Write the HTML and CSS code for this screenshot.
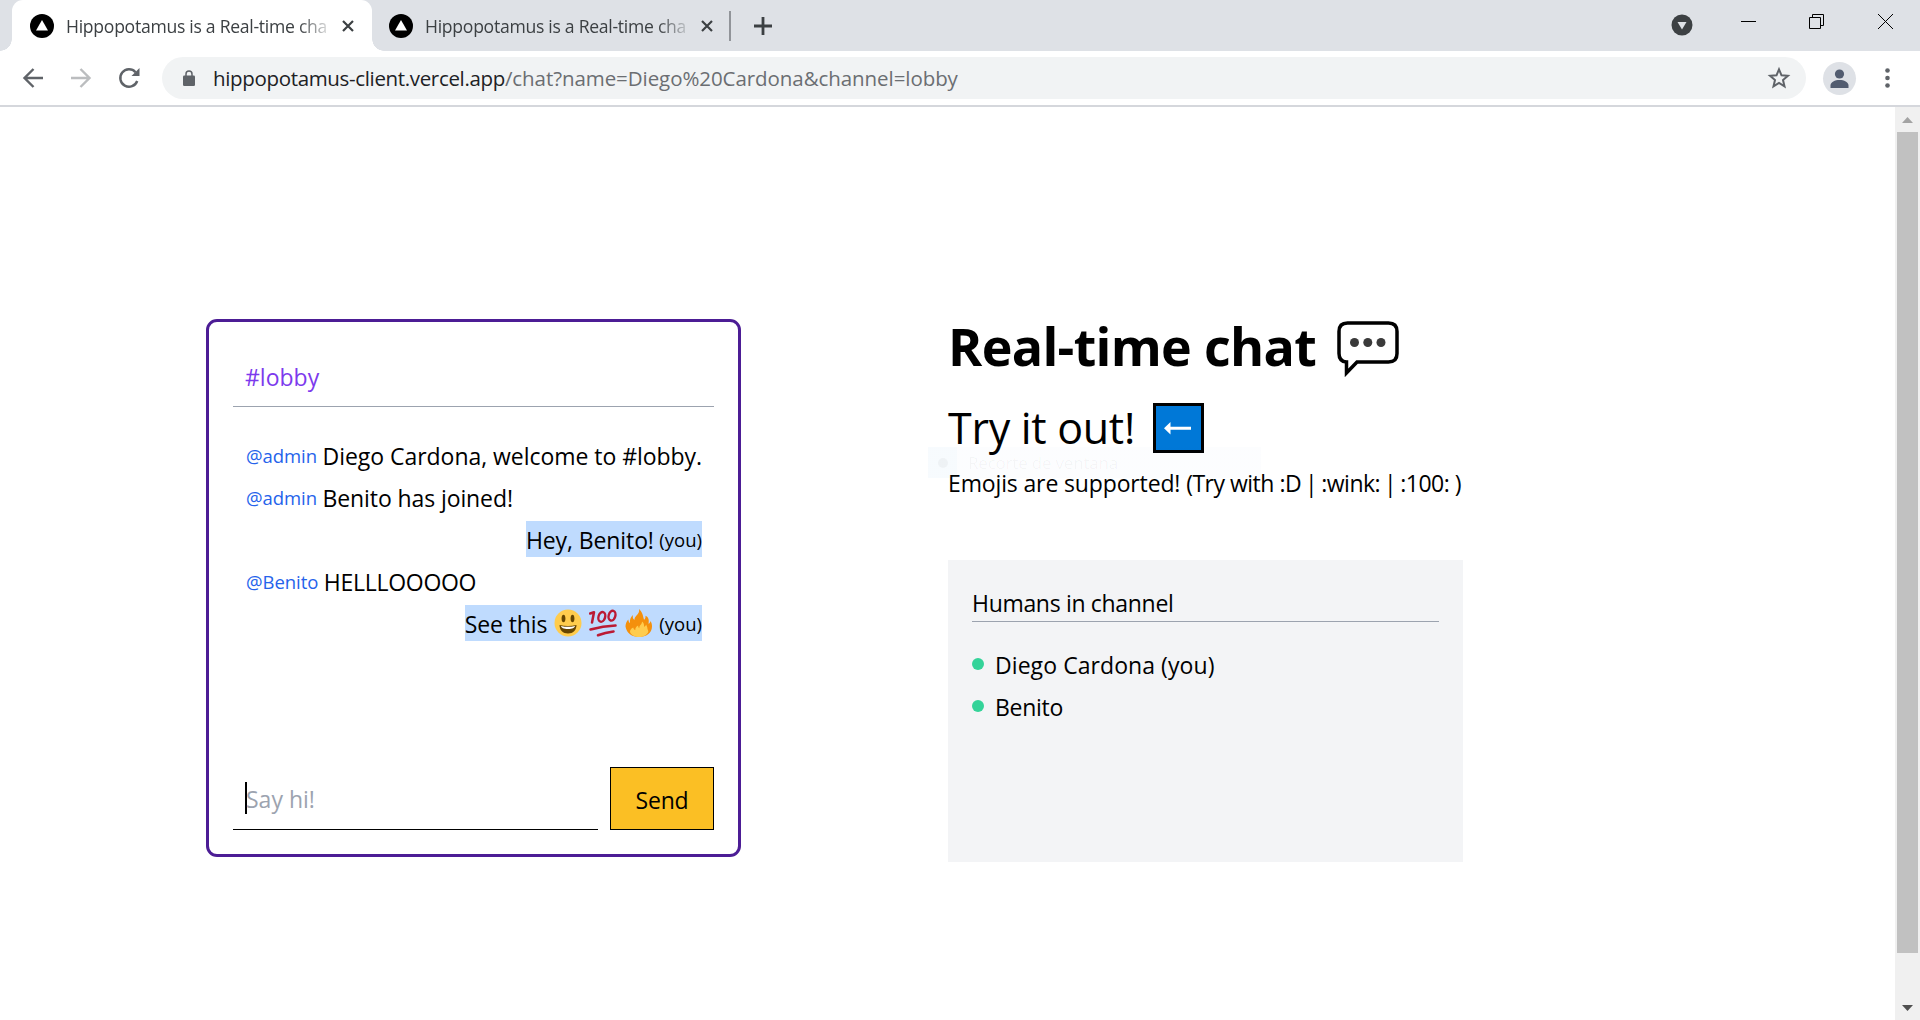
FILE: index.html
```html
<!DOCTYPE html>
<html lang="en">
<head>
<meta charset="utf-8">
<title>Hippopotamus is a Real-time chat</title>
<link rel="stylesheet" href="styles.css">
</head>
<body>
<header class="tabstrip">
  <div class="tab tab-active">
    <svg class="favicon" viewBox="0 0 24 24"><circle cx="12" cy="12" r="12"/><path d="M12 6l6 10.500H6z" fill="#fff"/></svg>
    <span class="tab-title">Hippopotamus is a Real-time cha</span>
    <svg class="tab-close" viewBox="0 0 12 12"><path d="M1 1l10 10M11 1L1 11"/></svg>
  </div>
  <div class="tab tab-idle">
    <svg class="favicon" viewBox="0 0 24 24"><circle cx="12" cy="12" r="12"/><path d="M12 6l6 10.500H6z" fill="#fff"/></svg>
    <span class="tab-title">Hippopotamus is a Real-time cha</span>
    <svg class="tab-close" viewBox="0 0 12 12"><path d="M1 1l10 10M11 1L1 11"/></svg>
  </div>
  <div class="tab-sep"></div>
  <svg class="new-tab" viewBox="0 0 18 18"><path d="M9 0v18M0 9h18"/></svg>
  <div class="window-controls">
    <svg class="media" viewBox="0 0 22 22"><circle cx="11" cy="11" r="10.500" fill="#3c4043"/><path d="M6.500 8h9L11 15.500z" fill="#dee1e6"/></svg>
    <svg class="minimize" viewBox="0 0 15 15"><path d="M0 7.500h15"/></svg>
    <svg class="restore" viewBox="0 0 15 15"><path d="M.5 3.500h11v11H.5zM3.500 3.500v-3h11v11h-3"/></svg>
    <svg class="close" viewBox="0 0 15 15"><path d="M0 0l15 15M15 0L0 15"/></svg>
  </div>
</header>
<nav class="toolbar">
  <svg class="nav-icon" viewBox="0 0 20 20"><path d="M20 10H1.500M10.500 1L1.500 10l9 9"/></svg>
  <svg class="nav-icon nav-disabled" viewBox="0 0 20 20"><path d="M0 10h18.500M9.500 1l9 9-9 9"/></svg>
  <svg class="nav-icon" viewBox="0 0 20 20"><path d="M18.200 13A8.700 8.700 0 1 1 16.500 4.200"/><path class="solid" d="M20.500 0v8h-8z"/></svg>
  <div class="omnibox">
    <svg class="lock" viewBox="0 0 12 16"><rect y="5.500" width="12" height="10.500" rx="1.300"/><path d="M3 6V4a3 3 0 0 1 6 0v2" fill="none" stroke="#5f6368" stroke-width="1.500"/></svg>
    <span class="url"><span class="url-host">hippopotamus-client.vercel.app</span><span class="url-path">/chat?name=Diego%20Cardona&amp;channel=lobby</span></span>
    <svg class="star" viewBox="0 0 22 22"><path d="M11 2.300l2.500 6 6.400.500-4.900 4.200 1.500 6.300-5.500-3.400-5.500 3.400L7 13 2.100 8.800l6.400-.500z"/></svg>
  </div>
  <svg class="avatar" viewBox="0 0 33 33"><circle cx="16.500" cy="16.500" r="16.500" fill="#dee1e6"/><circle cx="16.500" cy="12" r="4.600" fill="#525c70"/><path d="M7.500 26v-2.500c0-3.500 4.500-5.500 9-5.500s9 2 9 5.500V26z" fill="#525c70"/></svg>
  <svg class="menu" viewBox="0 0 5 20"><circle cx="2.500" cy="2.500" r="2.300"/><circle cx="2.500" cy="10" r="2.300"/><circle cx="2.500" cy="17.500" r="2.300"/></svg>
</nav>
<div class="viewport">
  <main class="page">
    <section class="chat">
      <h2 class="channel">#lobby</h2>
      <ul class="messages">
        <li><span class="author">@admin</span><span class="text">Diego Cardona, welcome to #lobby.</span></li>
        <li><span class="author">@admin</span><span class="text tight">Benito has joined!</span></li>
        <li class="own"><span class="text tight">Hey, Benito!</span><span class="you">(you)</span></li>
        <li><span class="author">@Benito</span><span class="text tighter">HELLLOOOOO</span></li>
        <li class="own"><span class="text tight">See this</span>
          <svg class="emoji" viewBox="0 0 28 28"><circle cx="14" cy="14" r="13.500" fill="#ffcc4d"/><ellipse cx="9.500" cy="9.500" rx="1.900" ry="3.800" fill="#664500"/><ellipse cx="18.500" cy="9.500" rx="1.900" ry="3.800" fill="#664500"/><path d="M5.500 16q8.500 2 17 0c0 5-3.500 8.500-8.500 8.500S5.500 21 5.500 16z" fill="#664500"/><path d="M7 17q7 1.700 14 0c-.5 2-2.500 3-7 3s-6.500-1-7-3z" fill="#fff"/></svg>
          <svg class="emoji" viewBox="0 0 28 28"><g fill="none" stroke="#bb1a34" stroke-linecap="round" stroke-linejoin="round"><path stroke-width="2.500" d="M1.200 4.500L5 3.200 3 13.500"/><ellipse stroke-width="2.400" cx="12.800" cy="7.900" rx="3.300" ry="5" transform="rotate(16 12.800 7.900)"/><ellipse stroke-width="2.400" cx="23" cy="6.700" rx="3.300" ry="5" transform="rotate(16 23 6.700)"/><path stroke-width="2.600" d="M1.500 20.500Q14 17 26.500 16.500M9 26.200Q16 23.500 24.500 22.500"/></g></svg>
          <svg class="emoji" viewBox="0 0 28 28"><path fill="#f4900c" d="M27 17.500c0-2-.5-4-1.500-5.500-.2 1.500-1 2.500-2 2.800 1-4.500-.5-7-3-8 .2 2-.5 3.500-1.500 4C18 7 17.500 3 14 0c.8 3-1 5-2.500 6.500C10 8 9.300 9.500 9.500 11 7.800 10 7.500 8 8 6 5.500 8 4.500 11 5 14c-1-.5-1.500-2-1.700-3.500C1.500 12.500 .5 15 .5 17.500 1.500 24 7 28 14 28s13-4 13-10.500z"/><path fill="#ffcc4d" d="M22.500 20c0-2-1-3.500-1.500-4.500-.3 1.500-1 2-2 2.200.3-2-.3-4-2-5.200 0 2.500-1.500 3-2.300 4.500-.5 1-.4 1.500-.3 2.200-1-.5-1.300-1.500-1.200-2.700-2 1-3 2.500-2.900 4.500-1-.3-1.800-1-2-2.500C6 19.500 5 21 5 23c1.500 3.500 5 5 9 5s8-2 9.300-5c0-1-.3-2-.8-3z"/></svg>
          <span class="you">(you)</span></li>
      </ul>
      <form class="composer">
        <div class="field"><span class="caret"></span><span class="placeholder">Say hi!</span></div>
        <button class="send" type="button">Send</button>
      </form>
    </section>
    <section class="info">
      <h1 class="title">Real-time chat
        <svg class="bubble" viewBox="0 0 62 58"><path d="M10.500 3h41q8.500 0 8.500 8.500v22q0 8.500-8.500 8.500H20L9.500 53V42Q2 41.500 2 33.500v-22Q2 3 10.500 3z" fill="#fff" stroke="#000" stroke-width="3.500"/><g fill="#3a3a3a"><circle cx="17.500" cy="22.500" r="4.500"/><circle cx="30.800" cy="22.500" r="4.500"/><circle cx="44" cy="22.500" r="4.500"/></g></svg>
      </h1>
      <h2 class="subtitle">Try it out!
        <svg class="arrow" viewBox="0 0 51 50"><path d="M1.500 1.500h48v47h-48z" fill="#0078d7" stroke="#000" stroke-width="3"/><path d="M11 25.200l6.500-6.200v4.700H38v3H17.500v4.800z" fill="#fff"/></svg>
      </h2>
      <p class="hint">Emojis are supported! <span class="codes">(Try with :D <span class="bar">|</span> :wink: <span class="bar">|</span> :100: )</span></p>
      <aside class="ghost"><span class="ghost-icon"></span>Recorte de ventana</aside>
      <div class="members">
        <h3 class="members-title">Humans in channel</h3>
        <ul class="member-list">
          <li><i class="dot"></i>Diego Cardona (you)</li>
          <li><i class="dot"></i><span class="tighter">Benito</span></li>
        </ul>
      </div>
    </section>
  </main>
  <div class="scrollbar">
    <svg class="scroll-arrow" viewBox="0 0 11 6"><path d="M5.500 0L11 6H0z" fill="#a3a3a3"/></svg>
    <div class="thumb"></div>
    <svg class="scroll-arrow" viewBox="0 0 11 6"><path d="M0 0h11L5.500 6z" fill="#505050"/></svg>
  </div>
</div>
</body>
</html>
```
FILE: styles.css
```css
* { box-sizing: border-box; }
body {
  margin: 0;
  width: 1920px;
  height: 1020px;
  overflow: hidden;
  background: #fff;
  color: #000;
  font-family: "Open Sans", "Noto Sans", sans-serif;
  font-size: 23px;
}
h1, h2, h3, p, ul { margin: 0; padding: 0; font-weight: 400; list-style: none; }
svg { display: block; flex: none; overflow: visible; }

/* Browser window */
.tabstrip { display: flex; height: 51px; background: #dee1e6; padding-left: 12px; }
.tab { display: flex; align-items: center; width: 360px; height: 51px; padding-left: 18px; }
.tab-idle { padding-left: 17px; }
.tab-active {
  position: relative;
  background: #fff;
  border-radius: 11px 11px 0 0;
}
.tab-active::before, .tab-active::after {
  content: "";
  position: absolute;
  bottom: 0;
  width: 12px;
  height: 12px;
}
.tab-active::before { left: -12px; background: radial-gradient(circle at 0 0, transparent 11.500px, #fff 12px); }
.tab-active::after { right: -12px; background: radial-gradient(circle at 100% 0, transparent 11.500px, #fff 12px); }
.favicon { width: 24px; height: 24px; margin-right: 12px; }
.tab-title {
  width: 264px;
  font-size: 17.600px;
  letter-spacing: -.28px;
  line-height: 50px;
  color: #3c4043;
  white-space: nowrap;
  overflow: hidden;
  -webkit-mask-image: linear-gradient(90deg, #000 232px, transparent 268px);
  mask-image: linear-gradient(90deg, #000 232px, transparent 268px);
}
.tab-close { width: 12px; height: 12px; margin-left: 12px; stroke: #3c4043; stroke-width: 2.200; }
.tab-sep { width: 2px; height: 30px; margin: 11px 0 0 -3px; background: #919499; }
.new-tab { width: 18px; height: 18px; margin: 17px 0 0 23px; stroke: #3c4043; stroke-width: 2.800; }
.window-controls { display: flex; margin-left: auto; padding-right: 27px; }
.media { width: 22px; height: 22px; margin: 14px 48px 0 0; }
.minimize, .restore, .close { width: 15px; height: 15px; margin-top: 14px; fill: none; stroke: #000; stroke-width: 1; }
.restore { margin-left: 53px; }
.close { margin-left: 54px; }

.toolbar { display: flex; align-items: center; height: 56px; padding: 0 30px 0 23px; border-bottom: 2px solid #d5d7dc; }
.nav-icon { width: 20px; height: 20px; margin-right: 28px; fill: none; stroke: #5f6368; stroke-width: 2.400; }
.nav-disabled { stroke: #bbbdbf; }
.solid { fill: #5f6368; stroke: none; }
.omnibox { display: flex; align-items: center; width: 1644px; height: 42px; margin-left: -5px; border-radius: 21px; background: #f1f3f4; padding: 0 16px 0 21px; }
.lock { width: 12px; height: 16px; fill: #5f6368; }
.url { flex: 1; margin-left: 18px; font-size: 20.500px; line-height: 42px; color: #202124; white-space: nowrap; }
.url-host { letter-spacing: -.34px; }
.url-path { color: #6b6e72; letter-spacing: -.07px; }
.star { width: 22px; height: 22px; fill: none; stroke: #5f6368; stroke-width: 2; }
.avatar { width: 33px; height: 33px; margin-left: 17px; }
.menu { width: 5px; height: 20px; margin-left: auto; fill: #5f6368; }

/* Page */
.viewport { display: flex; height: 913px; }
.page { display: flex; flex: 1; gap: 207px; align-items: flex-start; padding: 212px 0 0 206px; }
.scrollbar { display: flex; flex-direction: column; align-items: center; width: 25px; background: #f0f0f0; padding-top: 10px; }
.scroll-arrow { width: 11px; height: 6px; }
.thumb { width: 21px; height: 821px; margin: 9px 0 52px; background: #c1c1c1; }

/* Chat card */
.chat { display: flex; flex-direction: column; width: 535px; height: 538px; border: 3px solid #4c1d95; border-radius: 11px; padding: 24px; }
.channel { height: 61px; padding: 13px 0 0 12px; border-bottom: 1px solid #9ca3af; font-size: inherit; line-height: 36px; color: #7c3aed; }
.messages { display: flex; flex-direction: column; gap: 6px; padding: 30px 12px 0 13px; }
.messages li { display: flex; align-items: center; gap: 5.500px; height: 36px; line-height: 36px; white-space: nowrap; }
.text { padding-top: 1px; letter-spacing: -.04px; }
.tight { letter-spacing: -.1px; }
.tighter { letter-spacing: -.28px; }
.author { padding-top: 2px; font-size: 18.500px; letter-spacing: -.05px; color: #2563eb; }
.messages .own { align-self: flex-end; background: #bfdbfe; }
.you { padding-top: 2px; font-size: 18.500px; }
.emoji { width: 28px; height: 28px; margin: 0 1px; }
.composer { display: flex; gap: 12px; margin: auto 0 0; }
.field { flex: 1; display: flex; align-items: center; height: 63px; padding-left: 12px; border-bottom: 1px solid #000; }
.caret { width: 2px; height: 32px; background: #000; }
.placeholder { padding-top: 2px; color: #9ca3af; margin-left: -1px; }
.send { width: 104px; height: 63px; border: 1px solid #000; background: #fbbf24; padding: 2px 0 0; font: inherit; letter-spacing: -.2px; color: #000; }

/* Info column */
.info { position: relative; width: 515px; white-space: nowrap; }
.title { display: flex; gap: 21px; font-size: 52px; font-weight: 700; line-height: 54px; height: 54px; letter-spacing: -.68px; }
.bubble { width: 62px; height: 58px; margin-top: 1px; }
.subtitle { display: flex; gap: 18px; margin-top: 25px; font-size: 43px; line-height: 60px; height: 60px; letter-spacing: -.3px; }
.arrow { width: 51px; height: 50px; margin-top: 5px; }
.hint { margin-top: 7px; line-height: 36px; letter-spacing: -.14px; }
.codes { letter-spacing: -.5px; }
.bar { margin: 0 -1.500px; }
.ghost { position: absolute; left: -20px; top: 128px; width: 333px; height: 31px; display: flex; align-items: center; background: linear-gradient(90deg, rgba(0,120,215,.03) 29px, rgba(0,80,200,.012) 29px); color: rgba(0,0,0,.04); font-size: 17px; letter-spacing: -.2px; }
.ghost-icon { width: 10px; height: 10px; margin: 0 20px 0 10px; border-radius: 50%; background: rgba(0,0,0,.035); }
.members { height: 302px; margin-top: 59px; padding: 24px; background: #f3f4f6; }
.members-title { height: 38px; border-bottom: 1px solid #9ca3af; font-size: inherit; line-height: 38px; letter-spacing: -.32px; }
.member-list { display: flex; flex-direction: column; gap: 6px; margin-top: 25px; }
.member-list li { display: flex; line-height: 36px; letter-spacing: .07px; }
.dot { width: 12px; height: 12px; margin: 11px 11px 0 0; border-radius: 50%; background: #34d399; }
```
